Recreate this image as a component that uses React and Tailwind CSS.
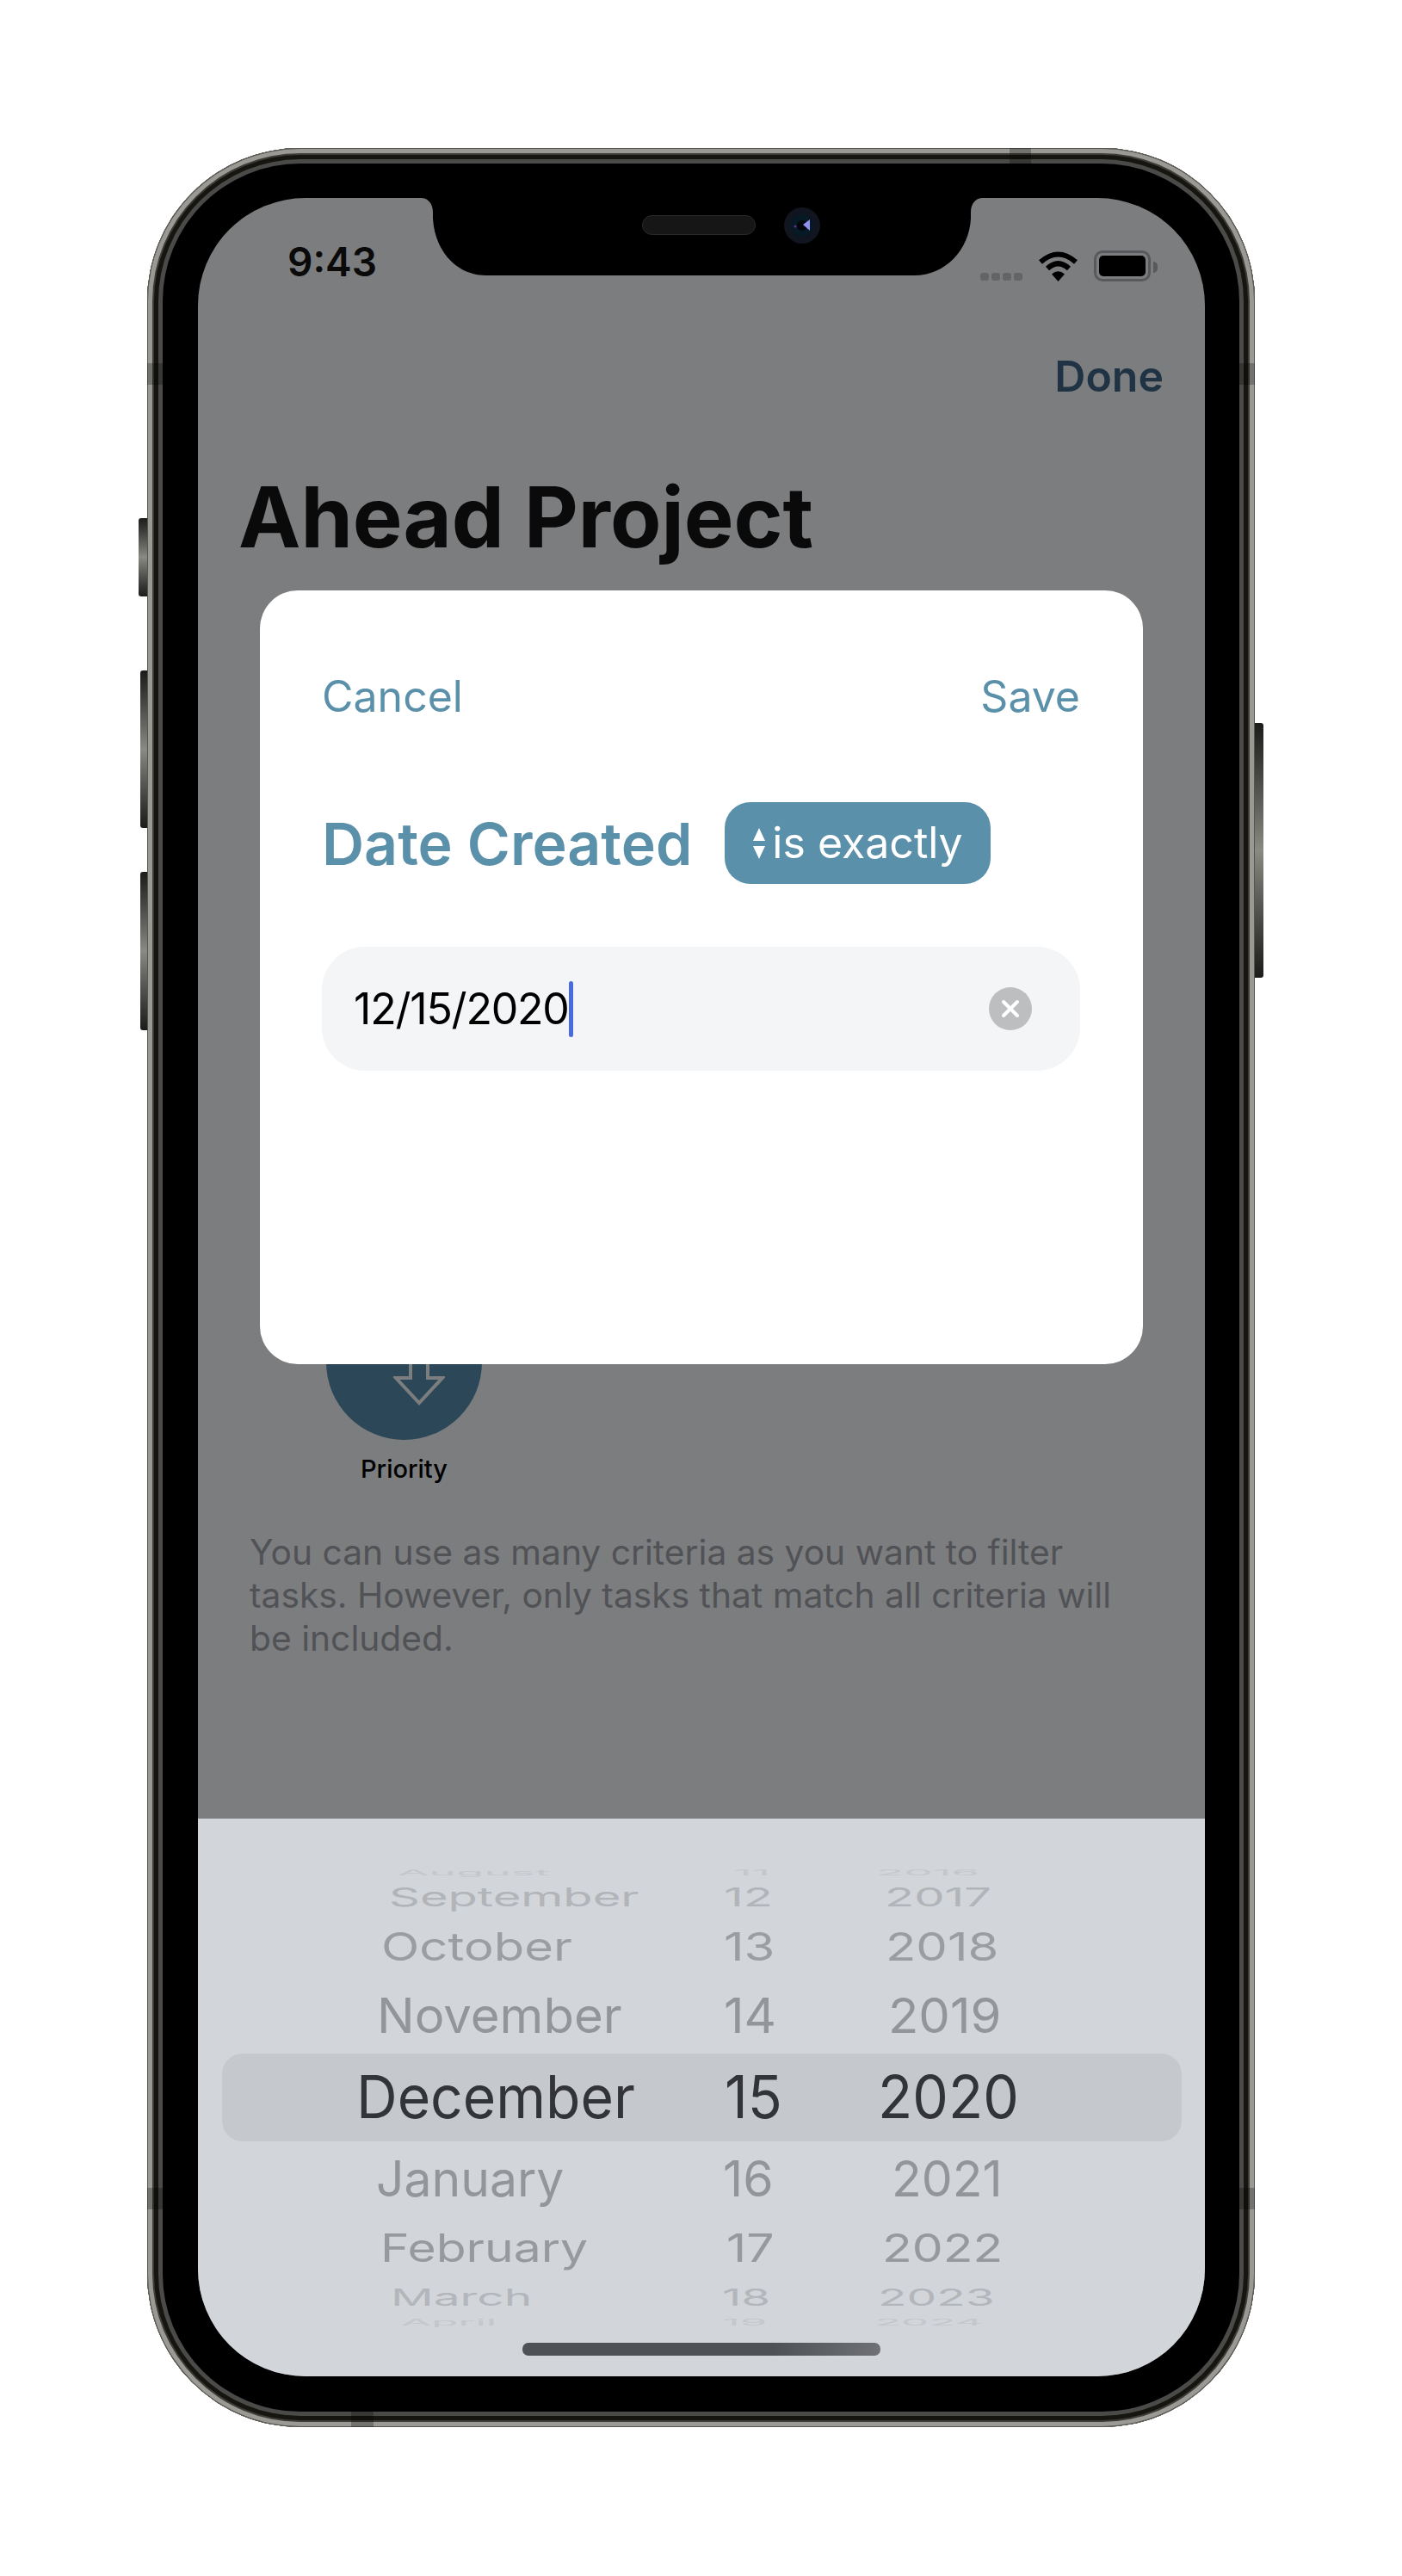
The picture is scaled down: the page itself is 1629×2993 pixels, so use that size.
const wheelRows = [
  { key: 'aug', h: 'h-[26px]', tone: 'text-[#c4c7cb]', text: 'text-[53px] scale-y-[0.17]', month: 'August', day: '11', year: '2016', mm: 'ml-[232px]', dm: 'ml-[22px]', ym: 'ml-[18px]' },
  { key: 'sep', h: 'h-[32px]', tone: 'text-[#b1b4b8]', text: 'text-[56px] scale-y-[0.54]', month: 'September', day: '12', year: '2017', mm: 'ml-[222px]', dm: 'ml-[11px]', ym: 'ml-[28px]' },
  { key: 'oct', h: 'h-[84px]', tone: 'text-[#9b9da1]', text: 'text-[58px] scale-y-[0.78]', month: 'October', day: '13', year: '2018', mm: 'ml-[213px]', dm: 'ml-[11px]', ym: 'ml-[29px]' },
  { key: 'nov', h: 'h-[76px]', tone: 'text-[#939598]', text: 'text-[58px] scale-y-[0.97]', month: 'November', day: '14', year: '2019', mm: 'ml-[208px]', dm: 'ml-[11px]', ym: 'ml-[32px]' },
  { key: 'dec', h: 'h-[112px]', tone: 'text-[#333438]', text: 'text-[66px] scale-y-[1.04]', month: 'December', day: '15', year: '2020', mm: 'ml-[184px]', dm: 'ml-[12px]', ym: 'ml-[20px]' },
  { key: 'jan', h: 'h-[78px]', tone: 'text-[#939598]', text: 'text-[57px] scale-y-[1.01]', month: 'January', day: '16', year: '2021', mm: 'ml-[207px]', dm: 'ml-[10px]', ym: 'ml-[36px]' },
  { key: 'feb', h: 'h-[82px]', tone: 'text-[#97999c]', text: 'text-[57px] scale-y-[0.8]', month: 'February', day: '17', year: '2022', mm: 'ml-[212px]', dm: 'ml-[14px]', ym: 'ml-[25px]' },
  { key: 'mar', h: 'h-[34px]', tone: 'text-[#b3b6ba]', text: 'text-[55px] scale-y-[0.5]', month: 'March', day: '18', year: '2023', mm: 'ml-[224px]', dm: 'ml-[9px]', ym: 'ml-[20px]' },
  { key: 'apr', h: 'h-[24px]', tone: 'text-[#c4c7cb]', text: 'text-[51px] scale-y-[0.19]', month: 'April', day: '19', year: '2024', mm: 'ml-[236px]', dm: 'ml-[9px]', ym: 'ml-[16px]' },
]

function StatusBar() {
  return (
    <div className="flex h-[100px] shrink-0 items-end justify-between pb-[3px] pl-[104px] pr-[55px]">
      <span className="text-[46px] font-semibold leading-[46px] text-[#0a0a0a]">9:43</span>
      <div className="flex items-end">
        <div className="mb-[1px] flex gap-[3px]">
          <span className="h-[9px] w-[10px] rounded-[3px] bg-[#636466]" />
          <span className="h-[9px] w-[10px] rounded-[3px] bg-[#636466]" />
          <span className="h-[9px] w-[10px] rounded-[3px] bg-[#636466]" />
          <span className="h-[9px] w-[10px] rounded-[3px] bg-[#636466]" />
        </div>
        <svg className="ml-[18px]" width="47" height="36" viewBox="0 0 47 36">
          <path d="M3 13.5Q23.5 -4.5 44 13.5" fill="none" stroke="#000" strokeWidth="6" />
          <path d="M11 21Q23.5 9.500 36 21" fill="none" stroke="#000" strokeWidth="6" />
          <path d="M16 27.500Q23.5 21 31 27.500L23.500 36Z" fill="#000" />
        </svg>
        <div className="ml-[18px] h-[36px] w-[66px] rounded-[10px] border-[3px] border-[#58595c] p-[3px]">
          <div className="h-full w-full rounded-[5px] bg-black" />
        </div>
        <span className="mb-[10px] ml-[3px] h-[13px] w-[5px] rounded-r-full bg-[#58595c]" />
      </div>
    </div>
  )
}

function Notch() {
  return (
    <>
      <svg className="absolute left-[259px] top-0" width="653" height="90" viewBox="0 0 653 90">
        <path d="M0 0H653C645 0 639 6 639 17V24C637 60 610 90 573 90H76C40 90 16 60 14 24V17C14 6 8 0 0 0Z" fill="#000" />
      </svg>
      <div className="absolute left-[516px] top-[20px] h-[23px] w-[132px] rounded-full border border-[#2a2a2a] bg-[#161616]" />
      <svg className="absolute left-[681px] top-[11px]" width="42" height="42" viewBox="0 0 42 42">
        <circle cx="21" cy="21" r="21" fill="#10151f" />
        <circle cx="21" cy="21" r="13" fill="#061a26" />
        <circle cx="21" cy="21" r="6" fill="#04060c" />
        <path d="M22 20L30 14V27Z" fill="#8f8ff0" />
        <circle cx="13" cy="22" r="1.500" fill="#6a2c8c" />
      </svg>
    </>
  )
}

function Modal() {
  return (
    <div className="absolute left-[72px] top-[456px] flex h-[899px] w-[1026px] flex-col rounded-[44px] bg-white pl-[72px] pr-[73px] pt-[93px] font-['Inter',sans-serif]">
      <div className="flex h-[60px] items-center justify-between text-[50px] text-[#5a90aa]">
        <span>Cancel</span>
        <span>Save</span>
      </div>
      <div className="mt-[93px] flex h-[95px] items-center">
        <span className="text-[68px] font-semibold text-[#5a90aa]">Date Created</span>
        <div className="ml-[38px] flex h-[95px] w-[309px] items-center rounded-[30px] bg-[#5a90aa] pl-[31px] text-[50px] text-white">
          <svg width="18" height="36" viewBox="0 0 18 36">
            <path d="M9 0L16 15H2Z" fill="#fff" />
            <path d="M9 36L16 21H2Z" fill="#fff" />
          </svg>
          <span className="ml-[6px]">is exactly</span>
        </div>
      </div>
      <div className="mt-[73px] flex h-[144px] items-center rounded-[50px] bg-[#f4f5f7] pl-[37px] pr-[56px]">
        <span className="text-[50px] tracking-[-1.2px] text-black">12/15/2020</span>
        <span className="h-[65px] w-[5px] rounded-full bg-[#4a6ae0]" />
        <div className="ml-auto flex h-[50px] w-[50px] items-center justify-center rounded-full bg-[#bdbec0]">
          <svg width="22" height="22" viewBox="0 0 22 22">
            <path d="M3 3L19 19M19 3L3 19" stroke="#fff" strokeWidth="4" strokeLinecap="round" />
          </svg>
        </div>
      </div>
    </div>
  )
}

function Wheel() {
  return (
    <div className="relative mt-auto h-[648px] shrink-0 bg-[#d2d5da] pt-[49px]">
      <div className="absolute left-[28px] top-[273px] h-[102px] w-[1115px] rounded-[24px] bg-[#c5c8cd]" />
      <div className="relative overflow-hidden">
        {wheelRows.map((row) => (
          <div key={row.key} className={`flex items-center leading-none ${row.h} ${row.tone}`}>
            <div className="w-[600px] shrink-0">
              <span className={`inline-block whitespace-nowrap ${row.text} ${row.mm}`}>{row.month}</span>
            </div>
            <div className="w-[170px] shrink-0">
              <span className={`inline-block whitespace-nowrap ${row.text} ${row.dm}`}>{row.day}</span>
            </div>
            <div className="flex-1">
              <span className={`inline-block whitespace-nowrap ${row.text} ${row.ym}`}>{row.year}</span>
            </div>
          </div>
        ))}
      </div>
      <div className="absolute bottom-[24px] left-[377px] h-[15px] w-[416px] rounded-[7px] bg-linear-to-r from-[#4e5156] from-70% to-[#6f7175]" />
    </div>
  )
}

function Screen() {
  return (
    <div className="relative flex h-[2531px] w-[1170px] flex-col overflow-hidden rounded-[125px] bg-[#7c7d7f] font-['Inter',sans-serif]">
      <Notch />
      <StatusBar />
      <div className="mt-[77px] flex h-[60px] shrink-0 items-center justify-end pr-[48px] text-[50px] font-semibold text-[#1f3345]">Done</div>
      <h1 className="ml-[47px] mt-[74px] h-[120px] shrink-0 text-[97px] font-bold leading-[120px] text-[#0a0a0a]">Ahead Project</h1>
      <div className="relative ml-[149px] mt-[831px] h-[181px] w-[181px] shrink-0 rounded-full bg-[#2c4858]">
        <svg className="absolute left-[78px] top-[60px]" width="60" height="82" viewBox="0 0 60 82">
          <path d="M20 2V49H3L30 78L57 49H40V2Z" fill="none" stroke="#7c7d7f" strokeWidth="4" />
        </svg>
      </div>
      <div className="ml-[149px] mt-[14px] h-[40px] w-[181px] shrink-0 text-center text-[29px] font-medium leading-[40px] text-black">Priority</div>
      <p className="ml-[60px] mt-[52px] w-[1040px] shrink-0 text-[40.75px] leading-[50px] text-[#515256]">
        You can use as many criteria as you want to filter tasks. However, only tasks that match all criteria will be included.
      </p>
      <Wheel />
      <Modal />
    </div>
  )
}

export default function App() {
  return (
    <div className="h-[2993px] w-[1629px] overflow-hidden bg-white pl-[171px] pt-[172px]">
      <div className="relative h-[2648px] w-[1287px] rounded-[178px] bg-black pb-[59px] pl-[59px] pr-[58px] pt-[58px] shadow-[inset_0_0_0_1px_#55544f,inset_0_0_0_6px_#9a9993,inset_0_0_0_8px_#3d3c38,inset_0_0_0_13px_#16150f,inset_0_0_0_18px_#4a4a48]">
        {/* side buttons */}
        <div className="absolute -left-[10px] top-[430px] h-[91px] w-[10px] rounded-l-[3px] bg-linear-to-b from-[#1c1c1a] via-[#8a8a84] to-[#1c1c1a]" />
        <div className="absolute -left-[8px] top-[607px] h-[183px] w-[8px] rounded-l-[3px] bg-linear-to-b from-[#1c1c1a] via-[#8a8a84] to-[#1c1c1a]" />
        <div className="absolute -left-[8px] top-[841px] h-[184px] w-[8px] rounded-l-[3px] bg-linear-to-b from-[#1c1c1a] via-[#8a8a84] to-[#1c1c1a]" />
        <div className="absolute -right-[10px] top-[668px] h-[296px] w-[10px] rounded-r-[3px] bg-linear-to-b from-[#1c1c1a] via-[#8a8a84] to-[#1c1c1a]" />
        {/* antenna bands */}
        <div className="absolute left-0 top-[250px] h-[25px] w-[18px] bg-black/25" />
        <div className="absolute right-0 top-[250px] h-[25px] w-[18px] bg-black/25" />
        <div className="absolute left-0 top-[2370px] h-[25px] w-[18px] bg-black/25" />
        <div className="absolute right-0 top-[2370px] h-[25px] w-[18px] bg-black/25" />
        <div className="absolute left-[1002px] top-0 h-[18px] w-[25px] bg-black/25" />
        <div className="absolute bottom-0 left-[237px] h-[18px] w-[26px] bg-black/25" />
        <Screen />
      </div>
    </div>
  )
}
